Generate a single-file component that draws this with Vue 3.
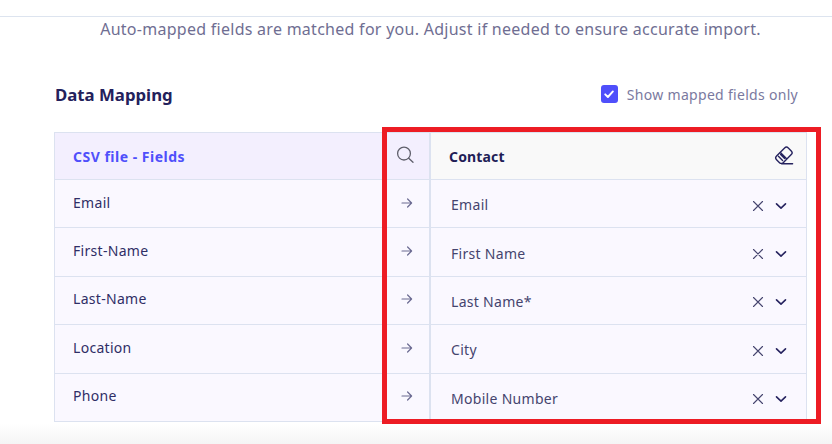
<script setup>
const rows = [
  { csv: 'Email', contact: 'Email' },
  { csv: 'First-Name', contact: 'First Name' },
  { csv: 'Last-Name', contact: 'Last Name*' },
  { csv: 'Location', contact: 'City' },
  { csv: 'Phone', contact: 'Mobile Number' }
]
</script>

<template>
  <div class="page">
    <div class="top-line"></div>
    <p class="subtitle">Auto-mapped fields are matched for you. Adjust if needed to ensure accurate import.</p>

    <div class="heading-row">
      <h2 class="heading">Data Mapping</h2>
      <label class="show-mapped">
        <span class="checkbox">
          <svg width="12" height="12" viewBox="0 0 12 12" fill="none">
            <path d="M2.2 6.3 4.9 9l5-5.6" stroke="#fff" stroke-width="1.9" stroke-linecap="round" stroke-linejoin="round" />
          </svg>
        </span>
        Show mapped fields only
      </label>
    </div>

    <div class="table-wrap">
      <div class="table">
        <div class="cell head csv-head">CSV file - Fields</div>
        <div class="cell head mid">
          <svg class="search" width="20" height="20" viewBox="0 0 20 20" fill="none" stroke="#5f5f6b" stroke-width="1.3" stroke-linecap="round">
            <circle cx="9" cy="8.6" r="6.4" />
            <path d="m13.7 13.2 4.3 4.1" />
          </svg>
        </div>
        <div class="cell head contact-head">
          <span>Contact</span>
          <svg width="20" height="20" viewBox="0 0 20 20" fill="none" stroke="#26235f" stroke-width="1.4" stroke-linecap="round" stroke-linejoin="round">
            <rect x="1.6" y="4.6" width="16.6" height="9.4" rx="2.6" transform="rotate(-45 9.9 9.3)" />
            <path d="m6.4 6.6 6 6M4.4 10.2l4.2 4.2M6.6 8.6l4 4M7.6 17.8h11" />
          </svg>
        </div>

        <template v-for="row in rows" :key="row.csv">
          <div class="cell csv">{{ row.csv }}</div>
          <div class="cell mid">
            <svg class="arrow" width="12" height="12" viewBox="0 0 12 12" fill="none" stroke="#6b6a92" stroke-width="1.2" stroke-linecap="round" stroke-linejoin="round">
              <path d="M1 6h9.6M6.6 2l4 4-4 4" />
            </svg>
          </div>
          <div class="cell contact">
            <span class="contact-name">{{ row.contact }}</span>
            <svg class="clear" width="12" height="12" viewBox="0 0 12 12" fill="none" stroke="#45446e" stroke-width="1.1" stroke-linecap="round">
              <path d="m1.5 1.5 9 9M10.5 1.5l-9 9" />
            </svg>
            <svg class="caret" width="12" height="12" viewBox="0 0 12 12" fill="none" stroke="#26235f" stroke-width="1.6" stroke-linecap="round" stroke-linejoin="round">
              <path d="m1.5 3.8 4.5 4.3 4.5-4.3" />
            </svg>
          </div>
        </template>
      </div>
      <div class="highlight"></div>
    </div>
    <div class="bottom-fade"></div>
  </div>
</template>

<style scoped>
.page {
  width: 832px;
  height: 444px;
  overflow: hidden;
  background: #fff;
  font-family: "Noto Sans", "Open Sans", sans-serif;
  display: flex;
  flex-direction: column;
}

.top-line {
  height: 1px;
  margin-top: 16px;
  background: #dde4ef;
}

.subtitle {
  margin: 0;
  height: 24px;
  line-height: 24px;
  text-align: center;
  font-size: 16px;
  letter-spacing: 0.27px;
  color: #6f6e92;
  padding-left: 29px;
}

.heading-row {
  display: flex;
  align-items: center;
  justify-content: space-between;
  margin-top: 41px;
  padding: 0 34px 0 55px;
  height: 24px;
}

.heading {
  margin: 0;
  font-size: 16.8px;
  font-weight: 700;
  color: #23215c;
}

.show-mapped {
  display: flex;
  align-items: center;
  gap: 9px;
  font-size: 14px;
  letter-spacing: 0.3px;
  color: #7a79a0;
}

.checkbox {
  width: 17px;
  height: 18px;
  border-radius: 3px;
  background: #4f4ffb;
  display: flex;
  align-items: center;
  justify-content: center;
}

.table-wrap {
  position: relative;
  margin: 26px 0 0 54px;
  width: 753px;
}

.table {
  display: grid;
  grid-template-columns: 329px 45px 1fr;
  grid-template-rows: 46px repeat(5, 48.4px);
  border: 1px solid #dce2f0;
  box-sizing: border-box;
  height: 290px;
  background: #faf8ff;
}

.cell {
  display: flex;
  align-items: center;
  border-top: 1px solid #dce2f0;
  box-sizing: border-box;
  font-size: 14px;
  letter-spacing: 0.3px;
  color: #2f2e66;
}

.head {
  border-top: 0;
  letter-spacing: 0;
}

.csv-head {
  background: #f3effe;
  padding-left: 18px;
  font-weight: 700;
  letter-spacing: 0.5px;
  color: #4f4ffb;
}

.contact-head {
  background: #f9f9f9;
  padding: 0 12px 0 18px;
  justify-content: space-between;
  font-weight: 700;
  letter-spacing: 0.15px;
  color: #1f1d57;
  border-left: 2px solid #dce2f0;
}

.mid {
  justify-content: center;
}

.head.mid {
  background: #f3effe;
}

.search {
  margin: 0 4px 3px 0;
}

.arrow {
  margin-bottom: 2px;
}

.csv {
  padding: 0 0 3px 18px;
}

.contact {
  padding: 2px 0 0 20px;
  border-left: 2px solid #dce2f0;
  color: #45446e;
}

.contact-name {
  flex: 1;
}

.clear {
  margin-top: 2px;
}

.caret {
  margin: 2px 19px 0 11px;
}

.highlight {
  position: absolute;
  left: 328px;
  top: -5px;
  width: 439px;
  height: 297px;
  border: 5px solid #ed1c24;
  box-sizing: border-box;
  pointer-events: none;
}

.bottom-fade {
  flex: 1;
  margin-top: 2px;
  background: linear-gradient(#fff, #f5f5f5);
}
</style>
